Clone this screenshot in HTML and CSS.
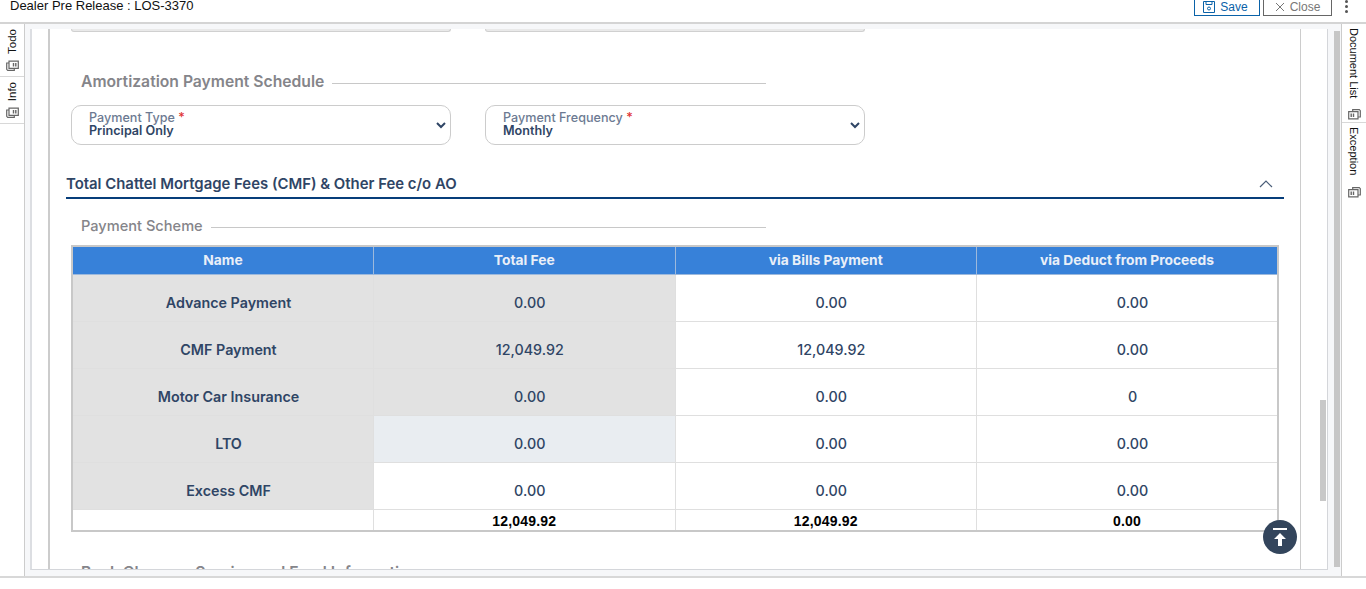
FILE: index.html
```html
<!DOCTYPE html>
<html lang="en">

<head>
	<meta charset="utf-8">
	<meta name="viewport" content="width=device-width, initial-scale=1.0">

	<title>Dealer Pre Release : LOS-3370</title>

	<link rel="stylesheet" href="styles.css">
</head>

<body>
	<svg width="0" height="0" class="icon-defs">
		<symbol id="stack" viewBox="0 0 13 11">
			<path d="M3 3H.7v6.300l1 1h6.600V8.500" fill="none" stroke="#666" stroke-width="1.200"/>
			<path d="M3 1.100h9.300v7.300H3z" fill="#fff" stroke="#666" stroke-width="1.200"/>
			<path d="M7.500 3v3.500M9.800 3v3.500" stroke="#666" stroke-width="1.400"/>
		</symbol>
	</svg>

	<header class="topbar">
		<div class="topbar-title">Dealer Pre Release : LOS-3370</div>
		<div class="topbar-actions">
			<button class="btn btn-save">
				<svg width="12" height="12" viewBox="0 0 12 12" fill="none" stroke="currentColor"><path d="M.5.5h11v11H.5zM3 .5v3h6v-3"/><circle cx="6" cy="7.500" r="1.500"/></svg>
				Save
			</button>
			<button class="btn btn-close">
				<svg width="10" height="10" viewBox="0 0 10 10" fill="none" stroke="currentColor"><path d="M1 1l8 8M9 1l-8 8"/></svg>
				Close
			</button>
			<div class="kebab"><span></span><span></span><span></span></div>
		</div>
	</header>

	<div class="workspace">
		<aside class="rail rail-left">
			<div class="rail-tab">
				<span class="rail-label">Todo</span>
				<svg class="rail-icon" width="13" height="11"><use href="#stack"/></svg>
			</div>
			<div class="rail-tab">
				<span class="rail-label">Info</span>
				<svg class="rail-icon" width="13" height="11"><use href="#stack"/></svg>
			</div>
		</aside>

		<main class="main">
			<div class="panel">
				<div class="panel-body">
					<div class="content">
						<div class="clipped-cards">
							<div class="clipped-card"></div>
							<div class="clipped-card"></div>
						</div>

						<div class="legend legend-large">
							<span>Amortization Payment Schedule</span>
						</div>

						<div class="select-row">
							<div class="select-box">
								<div class="select-text">
									<label>Payment Type <i>*</i></label>
									<strong>Principal Only</strong>
								</div>
								<svg class="select-arrow" width="10" height="7" viewBox="0 0 10 7" fill="none" stroke="#2f4565" stroke-width="2"><path d="M1 1l4 4 4-4"/></svg>
							</div>
							<div class="select-box">
								<div class="select-text">
									<label>Payment Frequency <i>*</i></label>
									<strong>Monthly</strong>
								</div>
								<svg class="select-arrow" width="10" height="7" viewBox="0 0 10 7" fill="none" stroke="#2f4565" stroke-width="2"><path d="M1 1l4 4 4-4"/></svg>
							</div>
						</div>

						<div class="section-head">
							<span>Total Chattel Mortgage Fees (CMF) &amp; Other Fee c/o AO</span>
							<svg width="14" height="8" viewBox="0 0 14 8" fill="none" stroke="#4a5d78" stroke-width="1.200"><path d="M1 7l6-6 6 6"/></svg>
						</div>

						<div class="legend">
							<span>Payment Scheme</span>
						</div>

						<table class="fees">
							<thead>
								<tr>
									<th>Name</th>
									<th>Total Fee</th>
									<th>via Bills Payment</th>
									<th>via Deduct from Proceeds</th>
								</tr>
							</thead>
							<tbody>
								<tr>
									<td class="name">Advance Payment</td>
									<td class="locked">0.00</td>
									<td>0.00</td>
									<td>0.00</td>
								</tr>
								<tr>
									<td class="name">CMF Payment</td>
									<td class="locked">12,049.92</td>
									<td>12,049.92</td>
									<td>0.00</td>
								</tr>
								<tr>
									<td class="name">Motor Car Insurance</td>
									<td class="locked">0.00</td>
									<td>0.00</td>
									<td>0</td>
								</tr>
								<tr>
									<td class="name">LTO</td>
									<td class="active">0.00</td>
									<td>0.00</td>
									<td>0.00</td>
								</tr>
								<tr>
									<td class="name">Excess CMF</td>
									<td>0.00</td>
									<td>0.00</td>
									<td>0.00</td>
								</tr>
							</tbody>
							<tfoot>
								<tr>
									<td></td>
									<td>12,049.92</td>
									<td>12,049.92</td>
									<td>0.00</td>
								</tr>
							</tfoot>
						</table>

						<div class="legend legend-large legend-next">
							<span>Bank Charges, Service and Fund Information</span>
						</div>
					</div>
				</div>
				<div class="inner-scroll"><div class="inner-thumb"></div></div>
				<button class="to-top" aria-label="Back to top">
					<svg width="16" height="18" viewBox="0 0 16 18" fill="#fff"><path d="M1 0h14v2H1zM8 5l6 6h-4v7H6v-7H2z"/></svg>
				</button>
			</div>
			<div class="outer-scroll"><div class="outer-thumb"></div></div>
		</main>

		<aside class="rail rail-right">
			<div class="rail-tab">
				<span class="rail-label">Document List</span>
				<svg class="rail-icon" width="13" height="11"><use href="#stack"/></svg>
			</div>
			<div class="rail-tab">
				<span class="rail-label">Exception</span>
				<svg class="rail-icon" width="13" height="11"><use href="#stack"/></svg>
			</div>
		</aside>
	</div>
</body>

</html>
```

FILE: styles.css
```css
* {
	box-sizing: border-box;
}

body {
	background-color: #fff;
	color: #2f4565;
	font-family: 'Inter', sans-serif;
	height: 589px;
	margin: 0;
	overflow: hidden;
}

.icon-defs {
	display: block;
	height: 0;
}

.topbar {
	align-items: flex-end;
	border-bottom: 2px solid #d4d4d4;
	display: flex;
	font-family: 'Liberation Sans', Arial, sans-serif;
	height: 24px;
	justify-content: space-between;
	overflow: hidden;
	padding: 0 18px 6px 10px;
}
.topbar-title {
	color: #111;
	font-size: 13px;
	line-height: 14px;
	margin-bottom: 3px;
}
.topbar-actions {
	align-items: flex-end;
	display: flex;
}
.btn {
	align-items: center;
	background: #fff;
	display: flex;
	font-family: inherit;
	font-size: 12px;
	gap: 5px;
	height: 24px;
	justify-content: center;
	margin-left: 3px;
	padding: 6px 0 0;
}
.btn-save {
	border: 1px solid #0a62a8;
	color: #0a62a8;
	padding-right: 3px;
	width: 66px;
}
.btn-close {
	border: 1px solid #666;
	color: #777;
	width: 69px;
}
.kebab {
	display: flex;
	flex-direction: column;
	gap: 2px;
	margin-left: 13px;
	padding-bottom: 3px;
	width: 3px;
}
.kebab span {
	background: #555;
	border-radius: 50%;
	height: 3px;
}

.workspace {
	border-bottom: 2px solid #d8d8d8;
	display: flex;
	height: 554px;
}

.rail {
	flex: none;
	font-family: 'Liberation Sans', Arial, sans-serif;
}
.rail-left {
	border-right: 1px solid #ccc;
	width: 25px;
}
.rail-right {
	border-left: 1px solid #ccc;
	width: 25px;
}
.rail-tab {
	align-items: center;
	border-bottom: 1px solid #d8d8d8;
	display: flex;
	flex-direction: column;
	gap: 6px;
	padding: 5px 0 5px;
}
.rail-right .rail-tab {
	gap: 11px;
	padding-bottom: 2px;
	padding-top: 4px;
}
.rail-right .rail-tab:last-child {
	border-bottom: 0;
}
.rail-label {
	color: #111;
	font-size: 11px;
	line-height: 12px;
	writing-mode: vertical-rl;
}
.rail-left .rail-label {
	font-size: 11.500px;
	transform: rotate(180deg);
}
.rail-right .rail-icon {
	transform: rotate(180deg);
}

.main {
	background: #f6f7f9;
	display: flex;
	flex: 1;
	gap: 6px;
	min-width: 0;
	padding: 5px 1px 6px 5px;
}

.panel {
	background: #fff;
	border-bottom: 1px solid #d4d6da;
	border-left: 2px solid #dcdee2;
	border-right: 1px solid #d4d6da;
	flex: 1;
	min-width: 0;
	padding-left: 16px;
	position: relative;
}
.panel-body {
	border-left: 2px solid #ccc;
	border-right: 1px solid #ccc;
	height: 100%;
	margin-right: 26px;
	overflow: hidden;
}
.content {
	padding-left: 16px;
}

.clipped-cards {
	display: flex;
	gap: 34px;
	padding-left: 5px;
}
.clipped-card {
	background: #e9e9e9;
	border: 1px solid #d0d0d0;
	border-radius: 0 0 10px 10px;
	border-top: 0;
	height: 3px;
	width: 380px;
}

.legend {
	align-items: center;
	color: #85858a;
	display: flex;
	font-size: 14.600px;
	font-weight: 500;
	gap: 8px;
	line-height: 18px;
	margin-left: 15px;
	width: 685px;
}
.legend::after {
	background: #c8c8c8;
	content: '';
	flex: 1;
	height: 1px;
	margin-top: 3px;
}
.legend-large {
	font-size: 15.700px;
	font-weight: 600;
	margin-top: 41px;
}
.legend-next {
	margin-top: 32px;
}
.legend-next::after {
	display: none;
}

.select-row {
	display: flex;
	gap: 34px;
	margin-top: 14px;
	padding-left: 5px;
}
.select-box {
	align-items: center;
	border: 1px solid #ccc;
	border-radius: 10px;
	display: flex;
	height: 40px;
	justify-content: space-between;
	padding: 0 4px 0 17px;
	width: 380px;
}
.select-text {
	display: flex;
	flex-direction: column;
	font-size: 12.600px;
	line-height: 12px;
	margin-top: -1px;
}
.select-text label {
	color: #6c7a92;
	font-weight: 500;
}
.select-text i {
	color: #e03030;
	font-style: normal;
}
.select-text strong {
	font-weight: 600;
	margin-top: 1px;
}

.section-head {
	align-items: center;
	border-bottom: 2px solid #063d7a;
	display: flex;
	font-size: 14.900px;
	font-weight: 600;
	height: 28px;
	justify-content: space-between;
	margin-top: 26px;
	padding: 3px 11px 3px 0;
	width: 1218px;
}

.section-head + .legend {
	margin-top: 18px;
}

.fees {
	border: 2px solid #c8c8c8;
	border-collapse: collapse;
	font-size: 14.300px;
	margin: 10px 0 0 5px;
	table-layout: fixed;
	width: 1208px;
}
.fees th {
	background: #3781d9;
	border: 1px solid #9db9dc;
	color: #e9eff8;
	font-size: 13.800px;
	font-weight: 700;
	height: 28px;
	padding: 0;
}
.fees td {
	border: 1px solid #dfdfdf;
	font-weight: 500;
	height: 47px;
	padding: 10px 0 0 11px;
	text-align: center;
}
.fees .name {
	background: #e2e2e2;
	font-weight: 600;
}
.fees .locked {
	background: #e2e2e2;
}
.fees .active {
	background: #e9edf1;
}
.fees tfoot td {
	color: #000;
	font-family: 'Liberation Sans', Arial, sans-serif;
	font-size: 14px;
	font-weight: 700;
	height: 22px;
	letter-spacing: .2px;
	padding: 3px 0 0;
}

.inner-scroll {
	bottom: 0;
	position: absolute;
	right: 1px;
	top: 0;
	width: 6px;
}
.inner-thumb {
	background: #c8c8c8;
	height: 101px;
	margin-top: 371px;
}

.outer-scroll {
	flex: none;
	padding-top: 2px;
	width: 6px;
}
.outer-thumb {
	background: #c6c6c6;
	height: 536px;
}

.to-top {
	align-items: center;
	background: #33455c;
	border: 0;
	border-radius: 50%;
	bottom: 15px;
	display: flex;
	height: 34px;
	justify-content: center;
	padding: 0;
	position: absolute;
	right: 30px;
	width: 34px;
}
```
